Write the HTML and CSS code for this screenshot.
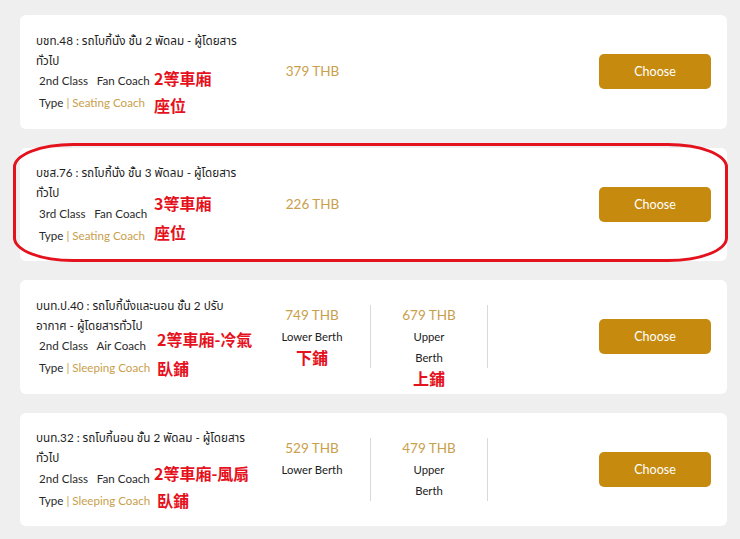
FILE: index.html
```html
<!DOCTYPE html>
<html lang="th">
<head>
<meta charset="utf-8">
<title>Seat classes</title>
<link rel="stylesheet" href="styles.css">
</head>
<body>
<div class="list">

  <div class="card">
    <div class="info">
      <div class="title">บชท.48 : รถโบกี้นั่ง ชั้น 2 พัดลม - ผู้โดยสาร<br>ทั่วไป</div>
      <div class="meta"><span class="slot">2nd Class&nbsp;&nbsp; Fan Coach</span><span class="note up3">2等車廂</span></div>
      <div class="meta"><span class="slot">Type <span class="bar">|</span> <span class="gold">Seating Coach</span></span><span class="note down2">座位</span></div>
    </div>
    <div class="prices">
      <div class="pcol single"><div class="price">379 THB</div></div>
    </div>
    <button class="choose">Choose</button>
  </div>

  <div class="card marked">
    <div class="info">
      <div class="title">บชส.76 : รถโบกี้นั่ง ชั้น 3 พัดลม - ผู้โดยสาร<br>ทั่วไป</div>
      <div class="meta"><span class="slot">3rd Class&nbsp;&nbsp; Fan Coach</span><span class="note up10">3等車廂</span></div>
      <div class="meta"><span class="slot">Type <span class="bar">|</span> <span class="gold">Seating Coach</span></span><span class="note up3">座位</span></div>
    </div>
    <div class="prices">
      <div class="pcol single"><div class="price">226 THB</div></div>
    </div>
    <button class="choose">Choose</button>
    <div class="oval"></div>
  </div>

  <div class="card">
    <div class="info">
      <div class="title">บนท.ป.40 : รถโบกี้นั่งและนอน ชั้น 2 ปรับ<br>อากาศ - ผู้โดยสารทั่วไป</div>
      <div class="meta"><span class="slot">2nd Class&nbsp;&nbsp; Air Coach</span><span class="note up7 shift">2等車廂-冷氣</span></div>
      <div class="meta"><span class="slot">Type <span class="bar">|</span> <span class="gold">Sleeping Coach</span></span><span class="note shift">臥鋪</span></div>
    </div>
    <div class="prices">
      <div class="pcol divided">
        <div class="price">749 THB</div>
        <div class="label">Lower Berth</div>
        <div class="pnote">下鋪</div>
      </div>
      <div class="pcol divided">
        <div class="price">679 THB</div>
        <div class="label">Upper</div>
        <div class="label">Berth</div>
        <div class="pnote below">上鋪</div>
      </div>
    </div>
    <button class="choose">Choose</button>
  </div>

  <div class="card">
    <div class="info">
      <div class="title">บนท.32 : รถโบกี้นอน ชั้น 2 พัดลม - ผู้โดยสาร<br>ทั่วไป</div>
      <div class="meta"><span class="slot">2nd Class&nbsp;&nbsp; Fan Coach</span><span class="note up5">2等車廂-風扇</span></div>
      <div class="meta"><span class="slot">Type <span class="bar">|</span> <span class="gold">Sleeping Coach</span></span><span class="note shift">臥鋪</span></div>
    </div>
    <div class="prices">
      <div class="pcol divided">
        <div class="price">529 THB</div>
        <div class="label">Lower Berth</div>
      </div>
      <div class="pcol divided">
        <div class="price">479 THB</div>
        <div class="label">Upper</div>
        <div class="label">Berth</div>
      </div>
    </div>
    <button class="choose">Choose</button>
  </div>

</div>
</body>
</html>
```

FILE: styles.css
```css
* { box-sizing: border-box; }

html, body {
  margin: 0;
  padding: 0;
  background: #efefef;
}

body {
  font-family: "Segoe UI", Lato, "Open Sans", "Noto Sans", "Noto Sans Thai", sans-serif;
  color: #222;
  font-size: 12px;
}

.list {
  display: flex;
  flex-direction: column;
  gap: 19px;
  padding: 15px 13px 0 20px;
}

.card {
  position: relative;
  display: flex;
  align-items: center;
  height: 113.5px;
  padding: 0 16px;
  background: #fff;
  border-radius: 6px;
}

.info {
  width: 218px;
  flex: none;
  display: flex;
  flex-direction: column;
}

.title {
  font-size: 11.7px;
  line-height: 20px;
  color: #1e1e1e;
  white-space: nowrap;
}

.meta {
  display: flex;
  align-items: center;
  height: 22px;
  padding-left: 3px;
  font-size: 11.6px;
  color: #2a2a2a;
  white-space: nowrap;
}

.slot {
  width: 115px;
  flex: none;
}

.bar { color: #c9a04c; }
.gold { color: #c9a04c; }

.note {
  font-family: "Noto Sans CJK TC", "Noto Sans CJK SC", sans-serif;
  font-weight: 700;
  font-size: 16px;
  line-height: 1;
  color: #e5121d;
}
.shift { margin-left: 3px; }
.up3 { transform: translateY(-3px); }
.up5 { transform: translateY(-5px); }
.up7 { transform: translateY(-7px); }
.up10 { transform: translateY(-10px); }
.down2 { transform: translateY(2px); }

.prices {
  display: flex;
  align-items: stretch;
}

.pcol {
  position: relative;
  width: 117px;
  text-align: center;
  display: flex;
  flex-direction: column;
}

.pcol.divided {
  border-right: 1px solid #d9d9d9;
}

.price {
  font-size: 13.5px;
  line-height: 21px;
  color: #c9a04c;
}

.label {
  font-size: 11.3px;
  line-height: 21px;
  color: #222;
}

.pnote {
  font-family: "Noto Sans CJK TC", "Noto Sans CJK SC", sans-serif;
  font-weight: 700;
  font-size: 16px;
  line-height: 21px;
  color: #e5121d;
}

.pnote.below {
  position: absolute;
  top: calc(100% + 1px);
  left: 0;
  right: 0;
  line-height: 18px;
}

.choose {
  margin-left: auto;
  width: 112px;
  height: 35px;
  border: none;
  border-radius: 5px;
  background: #c68b0e;
  color: #fff;
  font-family: "Segoe UI", Lato, "Open Sans", sans-serif;
  font-size: 12.5px;
  cursor: pointer;
}

.oval {
  position: absolute;
  top: -5px;
  left: -7px;
  right: -1px;
  bottom: -1px;
  border: 3px solid #e3121d;
  border-radius: 60px / 24px;
  pointer-events: none;
}
```
